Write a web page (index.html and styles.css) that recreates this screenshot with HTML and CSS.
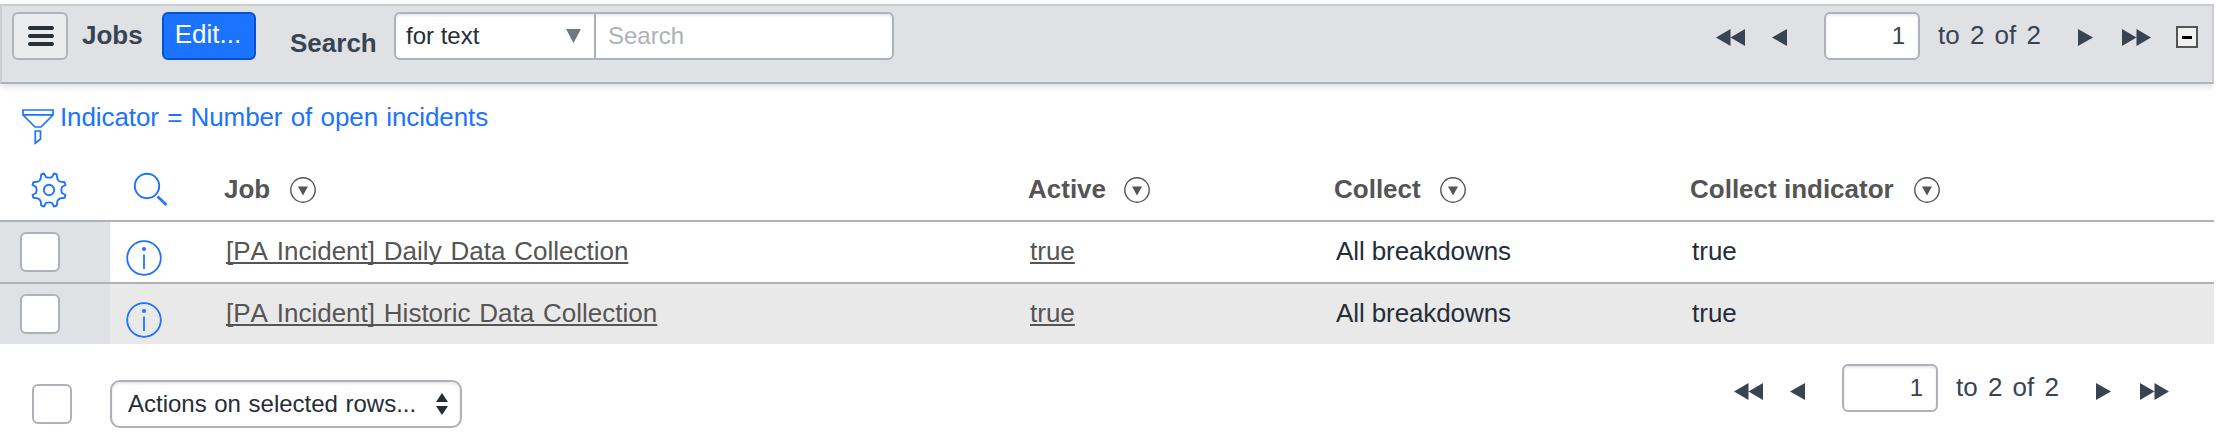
FILE: index.html
```html
<!DOCTYPE html>
<html lang="en">
<head>
<meta charset="utf-8">
<title>Jobs</title>
<link rel="stylesheet" href="styles.css">
</head>
<body>
<svg class="defs" aria-hidden="true">
  <symbol id="first" viewBox="0 0 29 17"><path d="M0 8.500L14.500 0V17ZM14.500 8.500L29 0V17Z"/></symbol>
  <symbol id="prev" viewBox="0 0 15 17"><path d="M0 8.500L15 0V17Z"/></symbol>
  <symbol id="next" viewBox="0 0 15 17"><path d="M0 0L15 8.500L0 17Z"/></symbol>
  <symbol id="last" viewBox="0 0 29 17"><path d="M0 0L14.500 8.500L0 17ZM14.500 0L29 8.500L14.500 17Z"/></symbol>
  <symbol id="sort" viewBox="0 0 26 26"><circle cx="13" cy="13" r="12.200" fill="none" stroke="currentColor" stroke-width="1.400"/><path d="M8 9.500h10l-5 9z" fill="currentColor"/></symbol>
  <symbol id="info" viewBox="0 0 36 36"><circle cx="18" cy="18" r="16.800" fill="none" stroke="currentColor" stroke-width="1.800"/><circle cx="18" cy="9" r="2" fill="currentColor"/><path d="M18 14.500V29" stroke="currentColor" stroke-width="1.800"/></symbol>
</svg>
<header class="bar">
  <button class="menu" aria-label="Menu"><i></i><i></i><i></i></button>
  <h1 class="title">Jobs</h1>
  <button class="edit">Edit...</button>
  <span class="search-label">Search</span>
  <div class="search-group">
    <div class="search-type"><span>for text</span><svg width="15" height="14"><path d="M0 0H15L7.500 14Z" fill="#6f7880"/></svg></div>
    <div class="search-input">Search</div>
  </div>
  <nav class="pager">
    <svg class="first"><use href="#first"/></svg>
    <svg class="prev"><use href="#prev"/></svg>
    <div class="page">1</div>
    <span class="range">to 2 of 2</span>
    <svg class="next"><use href="#next"/></svg>
    <svg class="last"><use href="#last"/></svg>
  </nav>
  <div class="collapse"><i></i></div>
</header>
<div class="filter">
  <svg width="34" height="37" fill="none" stroke="currentColor" stroke-width="1.700"><path d="M2 2H32V7L20 19H14L2 7ZM2 6.800H32M14.300 23H19.500V31L14.300 35.200Z"/></svg>
  <span>Indicator = Number of open incidents</span>
</div>
<main class="table">
  <div class="row head">
    <svg class="gear" viewBox="0 0 36 36" fill="none" stroke="currentColor" stroke-width="1.900" stroke-linejoin="round"><circle cx="18" cy="18" r="5.200"/><path d="M9.600 6.800L10.300 2.400L13 1.500L15 5.100Q18 6.200 21 5.100L23 1.500L25.700 2.400L26.400 6.800Q27.200 8.800 29.200 9.600L33.600 10.300L34.500 13L30.900 15Q29.800 18 30.900 21L34.500 23L33.600 25.700L29.200 26.400Q27.200 27.200 26.400 29.200L25.700 33.600L23 34.500L21 30.900Q18 29.800 15 30.900L13 34.500L10.300 33.600L9.600 29.200Q8.800 27.200 6.800 26.400L2.400 25.700L1.500 23L5.100 21Q6.200 18 5.100 15L1.500 13L2.400 10.300L6.800 9.600Q8.800 8.800 9.600 6.800Z"/></svg>
    <svg class="lens" viewBox="0 0 36 36" fill="none" stroke="currentColor"><circle cx="14" cy="14" r="12.200" stroke-width="1.900"/><path d="M24.500 24.500L33.500 33" stroke-width="2.600"/></svg>
    <div class="job">Job<svg class="sort"><use href="#sort"/></svg></div>
    <div class="active">Active<svg class="sort"><use href="#sort"/></svg></div>
    <div class="collect">Collect<svg class="sort"><use href="#sort"/></svg></div>
    <div class="indicator">Collect indicator<svg class="sort"><use href="#sort"/></svg></div>
  </div>
  <div class="row">
    <div class="pick"><i class="check"></i></div>
    <svg class="info"><use href="#info"/></svg>
    <div class="job"><a>[PA Incident] Daily Data Collection</a></div>
    <div class="active"><a>true</a></div>
    <div class="collect">All breakdowns</div>
    <div class="indicator">true</div>
  </div>
  <div class="row even">
    <div class="pick"><i class="check"></i></div>
    <svg class="info"><use href="#info"/></svg>
    <div class="job"><a>[PA Incident] Historic Data Collection</a></div>
    <div class="active"><a>true</a></div>
    <div class="collect">All breakdowns</div>
    <div class="indicator">true</div>
  </div>
</main>
<footer class="foot">
  <i class="check"></i>
  <div class="actions"><span>Actions on selected rows...</span><svg width="12" height="22" fill="#252d38"><path d="M0 9L6 0L12 9ZM0 13H12L6 22Z"/></svg></div>
  <nav class="pager">
    <svg class="first"><use href="#first"/></svg>
    <svg class="prev"><use href="#prev"/></svg>
    <div class="page">1</div>
    <span class="range">to 2 of 2</span>
    <svg class="next"><use href="#next"/></svg>
    <svg class="last"><use href="#last"/></svg>
  </nav>
</footer>
</body>
</html>
```
FILE: styles.css
```css
* { box-sizing: border-box; }
body {
  margin: 0;
  padding-top: 4px;
  width: 2214px;
  background: #fff;
  font: 26px/30px "Liberation Sans", Arial, sans-serif;
  color: #252d38;
}
svg { display: block; flex: none; overflow: visible; }
.defs { width: 0; height: 0; position: absolute; }
button { font: inherit; margin: 0; padding: 0; }

.bar {
  display: flex;
  align-items: flex-start;
  height: 80px;
  padding: 6px 0 0 10px;
  background: #e0e1e5;
  border: 2px solid #cbcdd3;
  border-bottom-color: #adb1b9;
  box-shadow: 0 3px 6px rgba(0, 0, 0, .12);
}
.menu {
  display: flex;
  flex-direction: column;
  align-items: center;
  justify-content: center;
  gap: 4px;
  width: 56px;
  height: 48px;
  border: 2px solid #b0b3bb;
  border-radius: 6px;
  background: #ebecee;
}
.menu i { width: 26px; height: 4px; border-radius: 2px; background: #27303b; transform: translateX(1px); }
.title { margin: 8px 0 0 14px; width: 80px; font-size: 26px; line-height: 30px; color: #384452; }
.edit {
  width: 94px;
  height: 48px;
  padding: 0 2px 4px 0;
  border: 2px solid #0653d1;
  border-radius: 6px;
  background: #1b73ff;
  color: #fff;
}
.search-label { margin: 16px 0 0 34px; width: 104px; font-weight: bold; color: #384452; }
.search-group {
  display: flex;
  width: 500px;
  height: 48px;
  border: 2px solid #adb1b9;
  border-radius: 6px;
  background: #fff;
  box-shadow: inset 0 2px 3px rgba(0, 0, 0, .09);
  font-size: 24px;
}
.search-type {
  display: flex;
  justify-content: space-between;
  width: 200px;
  padding: 7px 13px 0 10px;
  border-right: 2px solid #adb1b9;
}
.search-type svg { margin-top: 8px; }
.search-input { padding: 7px 0 0 12px; color: #adb1b9; }

.pager { display: flex; align-items: flex-start; color: #384452; fill: #384452; }
.bar .pager { margin-left: 822px; }
.first, .last { width: 29px; height: 17px; margin-top: 17px; }
.prev, .next { width: 15px; height: 17px; margin-top: 17px; }
.prev { margin-left: 27px; }
.page {
  width: 96px;
  height: 48px;
  margin-left: 37px;
  padding: 7px 13px 0 0;
  border: 2px solid #adb1b9;
  border-radius: 6px;
  background: #fff;
  box-shadow: inset 0 2px 3px rgba(0, 0, 0, .09);
  font-size: 24px;
  text-align: right;
}
.range { margin: 8px 0 0 18px; width: 140px; white-space: nowrap; word-spacing: 3px; }
.last { margin-left: 29px; }
.collapse {
  display: flex;
  align-items: center;
  justify-content: center;
  width: 22px;
  height: 22px;
  margin: 14px 0 0 25px;
  border: 2px solid #555;
  background: #f0f0f0;
}
.collapse i { width: 10px; height: 3px; background: #000; }

.filter { display: flex; height: 86px; padding: 24px 0 0 21px; color: #1b73ff; }
.filter span { margin: -6px 0 0 5px; word-spacing: 1.2px; letter-spacing: -.1px; }

.row {
  display: grid;
  grid-template-columns: 110px 116px 804px 306px 356px 1fr;
  height: 62px;
  border-top: 2px solid #adb1b9;
}
.row.head {
  grid-template-columns: 110px 114px 804px 306px 356px 1fr;
  height: 50px;
  border: 0;
  font-weight: bold;
  color: #555;
}
.head > div { display: flex; padding-top: 4px; }
.head .sort { width: 26px; height: 26px; margin: 3px 0 0 20px; }
.head .active .sort { margin-left: 18px; }
.head .collect .sort { margin-left: 19px; }
.gear { width: 36px; height: 36px; margin: 2px 0 0 31px; color: #1b73ff; }
.lens { width: 36px; height: 36px; margin: 2px 0 0 23px; color: #1b73ff; }
.row:not(.head) > div { padding-top: 14px; }
.row:not(.head) > .pick { padding: 10px 0 0 20px; background: #e0e1e5; }
.even { background: #e9e9e9; }
.check { display: block; width: 40px; height: 40px; border: 2px solid #adb1b9; border-radius: 6px; background: #fff; }
.info { width: 36px; height: 36px; margin: 18px 0 0 15.6px; color: #1b73ff; }
.row a { color: #555; text-decoration: underline; text-decoration-thickness: 2px; text-underline-offset: 2px; text-decoration-skip-ink: none; }
.row .job a { font-kerning: none; word-spacing: 1.6px; }
.row:not(.head) .collect { letter-spacing: -.1px; }

.foot { display: flex; align-items: flex-start; padding: 20px 0 0 32px; }
.foot .check { margin-top: 20px; }
.actions {
  display: flex;
  justify-content: space-between;
  width: 352px;
  height: 48px;
  margin: 16px 0 0 38px;
  padding: 7px 12px 0 16px;
  border: 2px solid #adb1b9;
  border-radius: 10px;
  box-shadow: inset 0 2px 3px rgba(0, 0, 0, .09);
  font-size: 24px;
  word-spacing: .9px;
}
.actions svg { margin-top: 4px; }
.foot .pager { margin-left: 1272px; }
.foot .first, .foot .last, .foot .prev, .foot .next { margin-top: 19px; }
```
